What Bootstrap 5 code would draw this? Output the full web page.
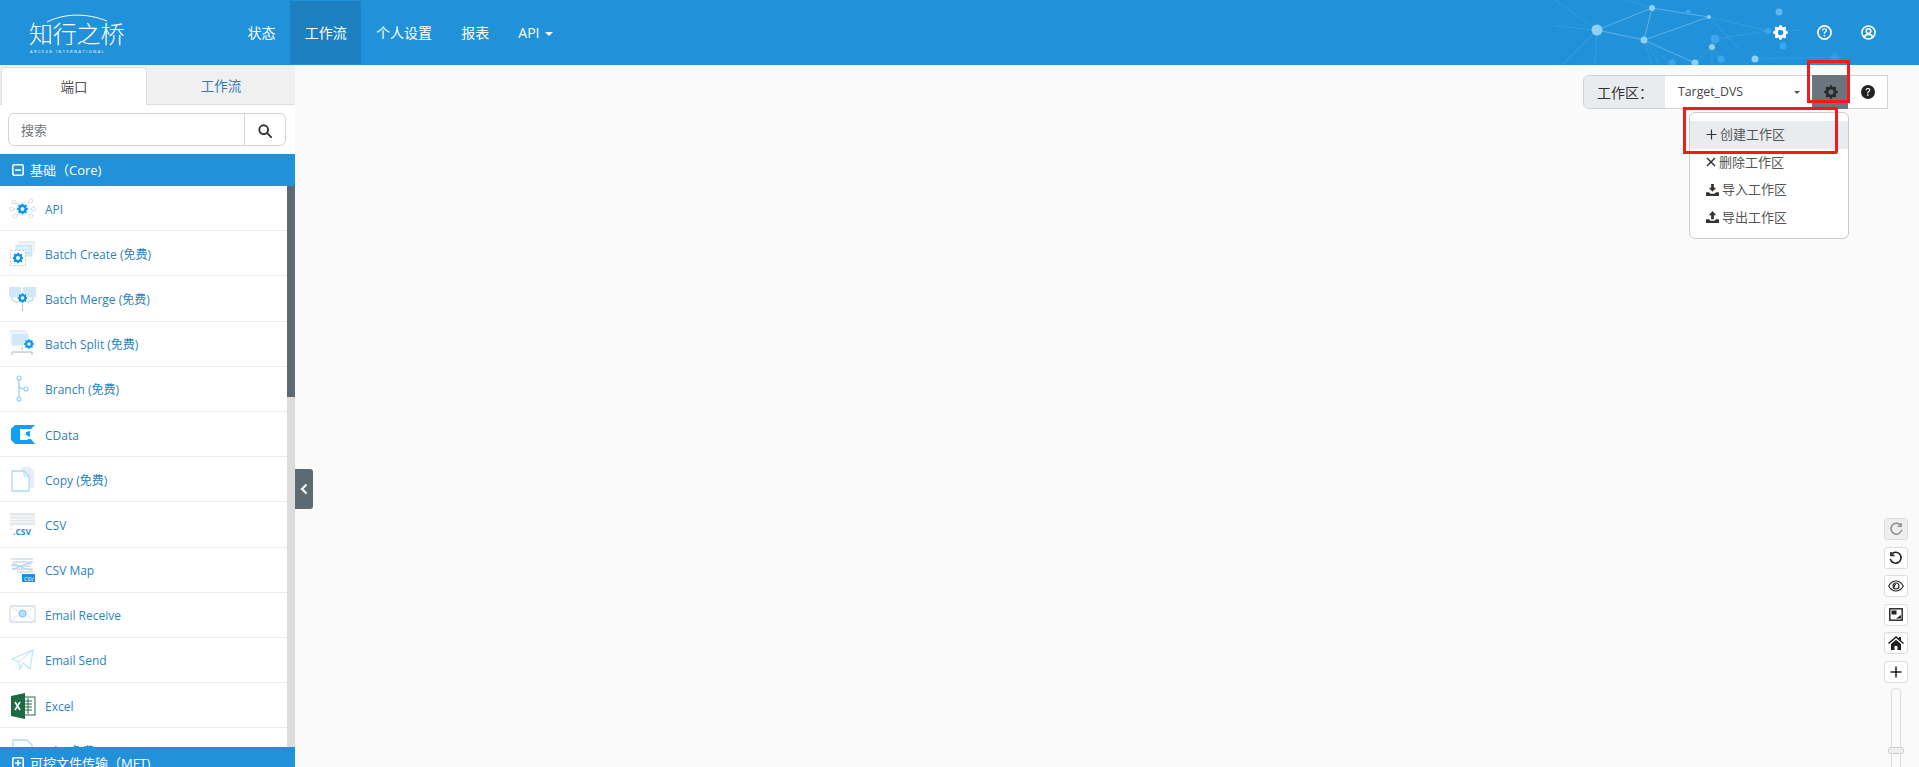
<!DOCTYPE html>
<html lang="zh">

<head>
    <meta charset="UTF-8" />
    <meta name="viewport" content="width=device-width, initial-scale=1" />
    <title>工作流</title>
    <link href="https://cdn.jsdelivr.net/npm/bootstrap@5.3.0/dist/css/bootstrap.min.css" rel="stylesheet">
    <style>
        html, body { height: 767px; overflow: hidden; }
        body { font-family: "Open Sans", "Noto Sans CJK SC", sans-serif; font-size: 14px; background: #fafafa; color: #333; }
        .top-bar { height: 65px; background: #2191d9; position: relative; padding: 0; align-items: stretch; flex-wrap: nowrap; justify-content: flex-start; }
        .top-net { position: absolute; left: 1500px; top: 0; width: 419px; height: 65px; }
        .brand-box { width: 233px; position: relative; height: 65px; color: #fff; }
        .brand-arc { position: absolute; left: 45px; top: 13px; }
        .brand-name { position: absolute; left: 29px; top: 17px; font-size: 24px; line-height: 34px; letter-spacing: -.2px; font-weight: 300; white-space: nowrap; }
        .brand-sub { position: absolute; left: 30px; top: 49px; font-size: 4px; line-height: 5px; letter-spacing: 1.45px; white-space: nowrap; }
        .top-links { display: flex; margin-top: 1px; height: 63px; }
        .top-links a { color: #fff; padding: 0 14.6px; line-height: 63px; font-size: 14px; text-decoration: none; white-space: nowrap; }
        .top-links a.is-on { background: #1c7fbf; }
        .top-caret { display: inline-block; border: 4px solid transparent; border-top-color: #fff; border-bottom: 0; margin-left: 5px; vertical-align: 2px; }
        .top-icons { position: relative; margin-left: auto; display: flex; align-items: center; gap: 29px; padding-right: 43px; color: #fff; }
        .page-body { height: 702px; }
        .side-panel { width: 295px; flex: none; background: #fff; height: 702px; overflow: hidden; position: relative; }
        .side-tabs { height: 40px; background: #f0f0f0; border-bottom: 1px solid #ddd; padding: 2px 0 0 1px; flex-wrap: nowrap; }
        .side-tabs .nav-link { border-radius: 4px 4px 0 0; font-size: 13.5px; line-height: 22px; padding: 8px 0 6px; height: 38px; text-align: center; border: 0; color: #337ab7; }
        .side-tabs .nav-item:first-child { width: 146px; }
        .side-tabs .nav-item:last-child { flex: 1; }
        .side-tabs .nav-link.active { color: #555; background: #fff; border: 1px solid #ddd; border-bottom: 0; height: 38px; }
        .side-search { padding: 8px 9px 8px 8px; height: 49px; }
        .side-search .form-control { height: 33px; font-size: 13px; padding: 0 12px; border-color: #ced4da; }
        .side-search .form-control::placeholder { color: #777; }
        .side-search .btn { width: 42px; padding: 0; background: #fff; border-color: #ced4da; color: #333; }
        .group-head { height: 32px; background: #2191d9; color: #fff; display: flex; align-items: center; gap: 6px; padding-left: 12px; font-size: 13px; line-height: 32px; }
        .list-wrap { height: 561px; overflow: hidden; }
        .conn-list { flex: 1; }
        .conn-row { height: 45.2px; flex: none; display: flex; align-items: center; padding: 0 0 0 9px; border-bottom: 1px solid #ececec; color: #2a83bf; font-size: 12px; }
        .conn-name { padding-top: 3px; }
        .conn-ico { width: 27px; height: 27px; flex: none; margin-right: 9px; }
        .side-scroll { width: 8px; background: #dcdcdc; flex: none; }
        .side-thumb { height: 211px; background: #5c6a73; }
        .group-foot { position: absolute; left: 0; right: 0; top: 682px; }
        .collapse-tab { width: 18px; height: 40px; background: #5c6a73; border-radius: 0 3px 3px 0; color: #fff; position: absolute; left: 295px; top: 469px; display: flex; align-items: center; justify-content: center; }
        .work-area { flex: 1; min-width: 0; height: 702px; }
        .tool-line { padding: 10px 31px 0 0; height: 44px; }
        .space-group { width: 305px; height: 34px; position: relative; flex-wrap: nowrap; }
        .space-group .input-group-text { width: 83px; background: #e9ecef; padding: 0 0 0 13px; font-size: 14px; color: #333; height: 34px; border-color: #ced4da; }
        .space-pick { width: 148px; background: #fff; border: 1px solid #ced4da; border-left: 0; height: 34px; display: flex; align-items: center; justify-content: space-between; padding: 1px 12px 0 13px; font-size: 12.3px; color: #444; }
        .space-caret { border: 3px solid transparent; border-top-color: #555; border-bottom: 0; }
        .gear-btn { width: 37px; padding: 0; background: #6c757d; border: 0; border-radius: 0; color: #2b2b2b; height: 34px; }
        .help-btn { flex: 1; padding: 0; background: #fff; border: 1px solid #ced4da; border-left: 0; color: #222; border-radius: 0 4px 4px 0; height: 34px; }
        .space-menu { display: block; position: absolute; left: 106px; top: 37px; width: 160px; height: 127px; padding: 8px 0 0; margin: 0; min-width: 0; font-size: 13px; border-color: #ccc; border-radius: 6px; }
        .space-menu .dropdown-item { height: 27.7px; padding: 0 0 1px 16px; line-height: 25px; font-size: 13px; color: #555; display: flex; align-items: center; gap: 3px; }
        .space-menu .dropdown-item.is-hover { background: #e9ecef; }
        .mark-box { position: absolute; border: 3px solid #f5191b; border-radius: 2px; pointer-events: none; z-index: 1100; }
        .mark-gear { left: 225px; top: -15px; width: 43px; height: 43px; }
        .mark-item { left: 101px; top: 32px; width: 155px; height: 47px; }
        .zoom-tools { margin: 409px 11px 0 0; width: 24px; gap: 6.6px; align-self: flex-end; }
        .zoom-btn { width: 24px; height: 22px; padding: 0; background: #fff; border: 1px solid #ddd; border-radius: 3px; color: #222; display: flex; align-items: center; justify-content: center; }
        .zoom-btn.is-off { background: #eee; color: #888; }
        .zoom-track { width: 10px; height: 100px; margin: -2px 0 0 7px; border: 1px solid #ddd; border-radius: 4px 4px 0 0; background: #fafafa; position: relative; }
        .zoom-handle { position: absolute; left: -4px; top: 58px; width: 16px; height: 7px; background: #eee; border: 1px solid #ccc; border-radius: 3px; }
    </style>
</head>

<body>
    <svg width="0" height="0" class="position-absolute">
        <defs>
            <symbol id="i-gear" viewBox="0 0 16 16"><path fill="currentColor" d="M9.405 1.05c-.413-1.4-2.397-1.4-2.81 0l-.1.34a1.464 1.464 0 0 1-2.105.872l-.31-.17c-1.283-.698-2.686.705-1.987 1.987l.169.311c.446.82.023 1.841-.872 2.105l-.34.1c-1.4.413-1.4 2.397 0 2.81l.34.1a1.464 1.464 0 0 1 .872 2.105l-.17.31c-.698 1.283.705 2.686 1.987 1.987l.311-.169a1.464 1.464 0 0 1 2.105.872l.1.34c.413 1.4 2.397 1.4 2.81 0l.1-.34a1.464 1.464 0 0 1 2.105-.872l.31.17c1.283.698 2.686-.705 1.987-1.987l-.169-.311a1.464 1.464 0 0 1 .872-2.105l.34-.1c1.4-.413 1.4-2.397 0-2.81l-.34-.1a1.464 1.464 0 0 1-.872-2.105l.17-.31c.698-1.283-.705-2.686-1.987-1.987l-.311.169a1.464 1.464 0 0 1-2.105-.872l-.1-.34zM8 10.93a2.929 2.929 0 1 1 0-5.86 2.929 2.929 0 0 1 0 5.858z"/></symbol>
            <symbol id="i-qmark" viewBox="0 0 16 16"><path fill="currentColor" d="M5.255 5.786a.237.237 0 0 0 .241.247h.825c.138 0 .248-.113.266-.25.09-.656.54-1.134 1.342-1.134.686 0 1.314.343 1.314 1.168 0 .635-.374.927-.965 1.371-.673.489-1.206 1.06-1.168 1.987l.003.217a.25.25 0 0 0 .25.246h.811a.25.25 0 0 0 .25-.25v-.105c0-.718.273-.927 1.01-1.486.609-.463 1.244-.977 1.244-2.056 0-1.511-1.276-2.241-2.673-2.241-1.267 0-2.655.59-2.75 2.286zm1.557 5.763c0 .533.425.927 1.01.927.609 0 1.028-.394 1.028-.927 0-.552-.42-.94-1.029-.94-.584 0-1.009.388-1.009.94z"/></symbol>
            <!-- connector icons -->
            <symbol id="c-api" viewBox="0 0 27 27"><g fill="none" stroke="#d5dde7"><circle cx="5" cy="7" r="2"/><circle cx="22" cy="6" r="2"/><circle cx="2.500" cy="14" r="2"/><circle cx="24.500" cy="14" r="2"/><circle cx="6" cy="21" r="2"/><circle cx="22" cy="21" r="2"/><path d="M7 8l4 3M20 7l-4 4M5 14h5M22 14h-5M8 20l3-3M20 20l-3-3"/></g><circle cx="13.500" cy="14" r="7" fill="#e3f3fd"/><use href="#i-gear" x="8" y="8.500" width="11" height="11" color="#0a94ea"/></symbol>
            <symbol id="c-create" viewBox="0 0 27 27"><rect x="9" y="1" width="17" height="12" fill="#e9edf2"/><rect x="6" y="4" width="18" height="13" fill="#cfe8fb" stroke="#fff"/><path d="M9 8h12M9 11h12" stroke="#fff"/><rect x="1.500" y="10.500" width="15" height="15" fill="#fff" stroke="#bcc6d2" stroke-dasharray="2 2"/><use href="#i-gear" x="3.500" y="12.500" width="11" height="11" color="#0a94ea"/></symbol>
            <symbol id="c-merge" viewBox="0 0 27 27"><rect x="0" y="2" width="12" height="10" fill="#cfe8fb"/><rect x="14" y="2" width="13" height="10" fill="#cfe8fb"/><path d="M3 12v3l6 3M24 12v3l-6 3M13.500 19v7" stroke="#bcc6d2" fill="none"/><circle cx="13.500" cy="13" r="5" fill="#fff"/><use href="#i-gear" x="8.500" y="8" width="10" height="10" color="#0a94ea"/></symbol>
            <symbol id="c-split" viewBox="0 0 27 27"><rect x="1" y="0" width="17" height="12" fill="#e9edf2"/><rect x="2" y="3" width="18" height="13" fill="#cfe8fb" stroke="#fff"/><path d="M13 17v3M3 25v-3h20v3" stroke="#a9b4c2" fill="none"/><circle cx="20" cy="14" r="5" fill="#fff"/><use href="#i-gear" x="15" y="9" width="10" height="10" color="#0a94ea"/></symbol>
            <symbol id="c-branch" viewBox="0 0 27 27"><g fill="none" stroke="#8ccdf3" stroke-width="1.100"><circle cx="10" cy="3" r="2"/><circle cx="10" cy="24" r="2"/><circle cx="17" cy="14" r="2"/><path d="M10 5v17M10 9c0 4 2 5 5 5"/></g></symbol>
            <symbol id="c-cdata" viewBox="0 0 27 27"><path fill="#10a0f5" d="M6 4h20l-4 4h-4l-3 5 3 5h4l4 5H6l-4-4V8z"/><path fill="#fff" d="M11 8h8l-4 5.500 4 5.500h-8z"/><path fill="#10a0f5" d="M17 11l4-1v6l-4-2z"/></symbol>
            <symbol id="c-copy" viewBox="0 0 27 27"><path fill="#e9edf2" d="M12 1h9l4 4v17h-8z"/><path fill="#fff" stroke="#a6dcf7" stroke-width="1.300" d="M3 5h12l5 5v15H3z"/><path fill="none" stroke="#a6dcf7" d="M15 5v5h5"/></symbol>
            <symbol id="c-csv" viewBox="0 0 27 27"><rect x="1" y="2" width="25" height="12" fill="#e3e6ea"/><path d="M1 5h25M1 8h25M1 11h25" stroke="#fff"/><path d="M1 15h3M1 18h3" stroke="#e3e6ea"/><text x="4" y="24" font-size="8.500" font-weight="700" font-family="Open Sans" fill="#1f8fd8">.CSV</text></symbol>
            <symbol id="c-map" viewBox="0 0 27 27"><path d="M2 3h22M4 6h20M2 10h20M4 13h20M8 16h16" stroke="#d2dae3" stroke-width="1.400"/><path d="M3 8c8 0 10 6 20 6M3 13c8 0 10-6 20-6" stroke="#a6dcf7" fill="none" stroke-width="1.400"/><rect x="13" y="18" width="13" height="8" fill="#1f8fd8"/><text x="15" y="24.500" font-size="5.500" font-family="Open Sans" fill="#fff">CSV</text></symbol>
            <symbol id="c-recv" viewBox="0 0 27 27"><rect x="1" y="5" width="25" height="16" rx="1" fill="#fff" stroke="#d6dee8" stroke-width="1.300"/><path d="M1 5l12.500 9L26 5M1 21l9-8M26 21l-9-8" fill="none" stroke="#dfe5ec"/><circle cx="13.500" cy="12.500" r="3.500" fill="#b8e0f8" stroke="#73c1ee"/></symbol>
            <symbol id="c-send" viewBox="0 0 27 27"><path fill="#fff" stroke="#bce4f8" stroke-width="1.200" d="M3 13L24 4l-3 19-7-6-3 6-1-7z"/><path fill="none" stroke="#bce4f8" d="M24 4L10 16"/></symbol>
            <symbol id="c-excel" viewBox="0 0 27 27"><rect x="12" y="5" width="14" height="18" fill="#fff" stroke="#1e7145"/><path d="M15 9h8M15 12h8M15 15h8M15 18h8M19 6v16" stroke="#1e7145"/><path fill="#1e6b41" d="M2 4l14-3v26L2 24z"/><path d="M6 10l5 8M11 10l-5 8" stroke="#fff" stroke-width="1.600"/></symbol>
            <symbol id="c-file" viewBox="0 0 27 27"><path fill="#fff" stroke="#a6dcf7" stroke-width="1.300" d="M4 3h14l5 5v18H4z"/></symbol>
        </defs>
    </svg>

    <nav class="navbar top-bar">
        <svg class="top-net" viewBox="1500 0 419 65">
            <g fill="none" stroke="#7cc4f0" stroke-width="1">
                <path opacity=".65" d="M1597 30L1652 8L1709 17M1597 30L1644 40M1652 8L1644 40L1709 17M1644 40L1695 63"/>
                <path opacity=".22" d="M1597 30L1595 65M1597 30L1562 65M1597 30L1555 0M1597 30L1555 26M1644 40L1660 65M1644 40L1652 65M1644 40L1672 65M1709 17L1768 31M1712 47L1695 63M1712 47V65M1715 39L1768 31M1712 47L1721 59M1755 59L1835 57M1709 17L1740 50M1652 8L1600 -8M1755 59L1735 70M1768 31L1800 30"/>
            </g>
            <g fill="#8fd0f6">
                <circle cx="1597" cy="30" r="5.500"/><circle cx="1652" cy="8" r="3"/><circle cx="1709" cy="17" r="2"/><circle cx="1644" cy="40" r="3.500"/><circle cx="1695" cy="63" r="3.500"/><circle cx="1712" cy="47" r="3"/><circle cx="1755" cy="59" r="3.500"/>
            </g>
            <g fill="#3ea6ec">
                <circle cx="1715" cy="39" r="4.500"/><circle cx="1721" cy="59" r="3.500"/><circle cx="1688" cy="12" r="2.500"/><circle cx="1672" cy="63" r="3.500"/><circle cx="1768" cy="31" r="3"/><circle cx="1783" cy="46" r="3.500"/><circle cx="1835" cy="57" r="4.500" opacity=".5"/>
            </g>
            <circle cx="1779" cy="12" r="3.500" fill="#62b6ea"/>
        </svg>
        <div class="brand-box">
            <svg class="brand-arc" width="64" height="10" viewBox="0 0 64 10"><path d="M2 9C20 0 42 0 62 8" fill="none" stroke="#fff" stroke-width="1"/></svg>
            <div class="brand-name">知行之桥</div>
            <div class="brand-sub">ARCESB INTERNATIONAL</div>
        </div>
        <div class="top-links">
            <a href="#">状态</a>
            <a href="#" class="is-on">工作流</a>
            <a href="#">个人设置</a>
            <a href="#">报表</a>
            <a href="#">API<span class="top-caret"></span></a>
        </div>
        <div class="top-icons">
            <svg width="15" height="15"><use href="#i-gear"/></svg>
            <svg width="15" height="15" viewBox="0 0 16 16"><circle cx="8" cy="8" r="7" fill="none" stroke="currentColor" stroke-width="1.800"/><use href="#i-qmark" width="16" height="16"/></svg>
            <svg width="15" height="15" viewBox="0 0 16 16" fill="none" stroke="currentColor" stroke-width="1.700"><circle cx="8" cy="8" r="7"/><circle cx="8" cy="6.500" r="2.500"/><path d="M3.500 13c1-2.500 2.500-3 4.500-3s3.500.5 4.500 3"/></svg>
        </div>
    </nav>

    <div class="d-flex page-body">
        <aside class="side-panel d-flex flex-column">
            <ul class="nav side-tabs">
                <li class="nav-item"><a class="nav-link active" href="#">端口</a></li>
                <li class="nav-item"><a class="nav-link" href="#">工作流</a></li>
            </ul>
            <div class="input-group side-search flex-nowrap">
                <input type="text" class="form-control" placeholder="搜索">
                <button class="btn" type="button" aria-label="搜索">
                    <svg width="14" height="14" viewBox="0 0 16 16" fill="none" stroke="#333" stroke-width="2.200"><circle cx="6.500" cy="6.500" r="5"/><path d="M10.500 10.500L15 15" stroke-linecap="round"/></svg>
                </button>
            </div>
            <div class="group-head">
                <svg width="12" height="12" viewBox="0 0 12 12" fill="none" stroke="#fff" stroke-width="1.600"><rect x=".8" y=".8" width="10.400" height="10.400" rx="1.500"/><path d="M3 6h6"/></svg>
                <span>基础（Core)</span>
            </div>
            <div class="d-flex list-wrap">
                <div class="conn-list d-flex flex-column">
                    <div class="conn-row"><svg class="conn-ico"><use href="#c-api"/></svg><span class="conn-name">API</span></div>
                    <div class="conn-row"><svg class="conn-ico"><use href="#c-create"/></svg><span class="conn-name">Batch Create (免费)</span></div>
                    <div class="conn-row"><svg class="conn-ico"><use href="#c-merge"/></svg><span class="conn-name">Batch Merge (免费)</span></div>
                    <div class="conn-row"><svg class="conn-ico"><use href="#c-split"/></svg><span class="conn-name">Batch Split (免费)</span></div>
                    <div class="conn-row"><svg class="conn-ico"><use href="#c-branch"/></svg><span class="conn-name">Branch (免费)</span></div>
                    <div class="conn-row"><svg class="conn-ico"><use href="#c-cdata"/></svg><span class="conn-name">CData</span></div>
                    <div class="conn-row"><svg class="conn-ico"><use href="#c-copy"/></svg><span class="conn-name">Copy (免费)</span></div>
                    <div class="conn-row"><svg class="conn-ico"><use href="#c-csv"/></svg><span class="conn-name">CSV</span></div>
                    <div class="conn-row"><svg class="conn-ico"><use href="#c-map"/></svg><span class="conn-name">CSV Map</span></div>
                    <div class="conn-row"><svg class="conn-ico"><use href="#c-recv"/></svg><span class="conn-name">Email Receive</span></div>
                    <div class="conn-row"><svg class="conn-ico"><use href="#c-send"/></svg><span class="conn-name">Email Send</span></div>
                    <div class="conn-row"><svg class="conn-ico"><use href="#c-excel"/></svg><span class="conn-name">Excel</span></div>
                    <div class="conn-row"><svg class="conn-ico"><use href="#c-file"/></svg><span class="conn-name">File (免费)</span></div>
                </div>
                <div class="side-scroll"><div class="side-thumb"></div></div>
            </div>
            <div class="group-head group-foot">
                <svg width="12" height="12" viewBox="0 0 12 12" fill="none" stroke="#fff" stroke-width="1.600"><rect x=".8" y=".8" width="10.400" height="10.400" rx="1.500"/><path d="M3 6h6M6 3v6"/></svg>
                <span>可控文件传输（MFT)</span>
            </div>
        </aside>
        <div class="collapse-tab">
            <svg width="8" height="12" viewBox="0 0 8 12" fill="none" stroke="#fff" stroke-width="2.200"><path d="M6.500 1.500L2 6l4.500 4.500"/></svg>
        </div>

        <main class="work-area d-flex flex-column">
            <div class="tool-line d-flex justify-content-end">
                <div class="input-group space-group">
                    <span class="input-group-text">工作区：</span>
                    <div class="space-pick"><span>Target_DVS</span><span class="space-caret"></span></div>
                    <button class="btn gear-btn d-flex align-items-center justify-content-center" type="button" aria-label="设置"><svg width="14" height="14"><use href="#i-gear"/></svg></button>
                    <button class="btn help-btn d-flex align-items-center justify-content-center" type="button" aria-label="帮助">
                        <svg width="14" height="14" viewBox="0 0 16 16"><circle cx="8" cy="8" r="8" fill="#222"/><use href="#i-qmark" width="16" height="16" color="#fff"/></svg>
                    </button>
                    <div class="dropdown-menu space-menu">
                        <a class="dropdown-item is-hover" href="#"><svg width="11" height="11" viewBox="0 0 11 11" stroke="#333" stroke-width="1.200"><path d="M5.500 .5v10M.5 5.500h10"/></svg>创建工作区</a>
                        <a class="dropdown-item" href="#"><svg width="10" height="10" viewBox="0 0 10 10" stroke="#333" stroke-width="1.500"><path d="M1 1l8 8M9 1l-8 8"/></svg>删除工作区</a>
                        <a class="dropdown-item" href="#"><svg width="13" height="12" viewBox="0 0 14 13" fill="#333"><path d="M5.500 0h3v4H11L7 8.500 3 4h2.500zM0 9h3l2 1.500h4L11 9h3v4H0z"/></svg>导入工作区</a>
                        <a class="dropdown-item" href="#"><svg width="13" height="12" viewBox="0 0 14 13" fill="#333"><path d="M7 0l4 4.500H8.500V9h-3V4.500H3zM0 9h3l2 1.500h4L11 9h3v4H0z"/></svg>导出工作区</a>
                    </div>
                    <div class="mark-box mark-gear"></div>
                    <div class="mark-box mark-item"></div>
                </div>
            </div>
            <div class="zoom-tools d-flex flex-column">
                <button class="btn zoom-btn is-off" type="button" aria-label="重做"><svg width="14" height="14" viewBox="0 0 16 16" fill="none" stroke="currentColor" stroke-width="1.600"><path d="M13 3.500A6.200 6.200 0 1 0 14.500 9"/><path d="M13.800 1v4h-4" fill="none"/></svg></button>
                <button class="btn zoom-btn" type="button" aria-label="撤销"><svg width="14" height="14" viewBox="0 0 16 16" fill="none" stroke="currentColor" stroke-width="1.800"><path d="M3 3.500A6.200 6.200 0 1 1 1.500 9"/><path d="M2.200 1v4h4"/></svg></button>
                <button class="btn zoom-btn" type="button" aria-label="查看"><svg width="16" height="14" viewBox="0 0 16 14" fill="none" stroke="currentColor" stroke-width="1.100"><path d="M.7 7C3 3 5.500 2 8 2s5 1 7.300 5C13 11 10.500 12 8 12S3 11 .7 7z"/><circle cx="8" cy="7" r="3"/><path d="M8 5.500a1.500 1.500 0 0 0-1 2.700"/></svg></button>
                <button class="btn zoom-btn" type="button" aria-label="缩略图"><svg width="14" height="13" viewBox="0 0 14 13"><rect x=".8" y=".8" width="12.400" height="11.400" fill="#fff" stroke="#222" stroke-width="1.400"/><rect x="2.500" y="2.500" width="5" height="4" fill="#222"/><path d="M7 10.500h5V7z" fill="#222"/></svg></button>
                <button class="btn zoom-btn" type="button" aria-label="主页"><svg width="16" height="14" viewBox="0 0 16 14" fill="#222"><path d="M8 0l3 2.600V1h2v3.400L16 7l-1 1-7-6-7 6-1-1z"/><path d="M3 8l5-4.300L13 8v6H9.500V10h-3v4H3z"/></svg></button>
                <button class="btn zoom-btn" type="button" aria-label="放大"><svg width="12" height="12" viewBox="0 0 12 12" stroke="#222" stroke-width="1.500"><path d="M6 .5v11M.5 6h11"/></svg></button>
                <div class="zoom-track"><div class="zoom-handle"></div></div>
            </div>
        </main>
    </div>
    <script src="https://cdn.jsdelivr.net/npm/bootstrap@5.3.0/dist/js/bootstrap.bundle.min.js"></script>
</body>

</html>
